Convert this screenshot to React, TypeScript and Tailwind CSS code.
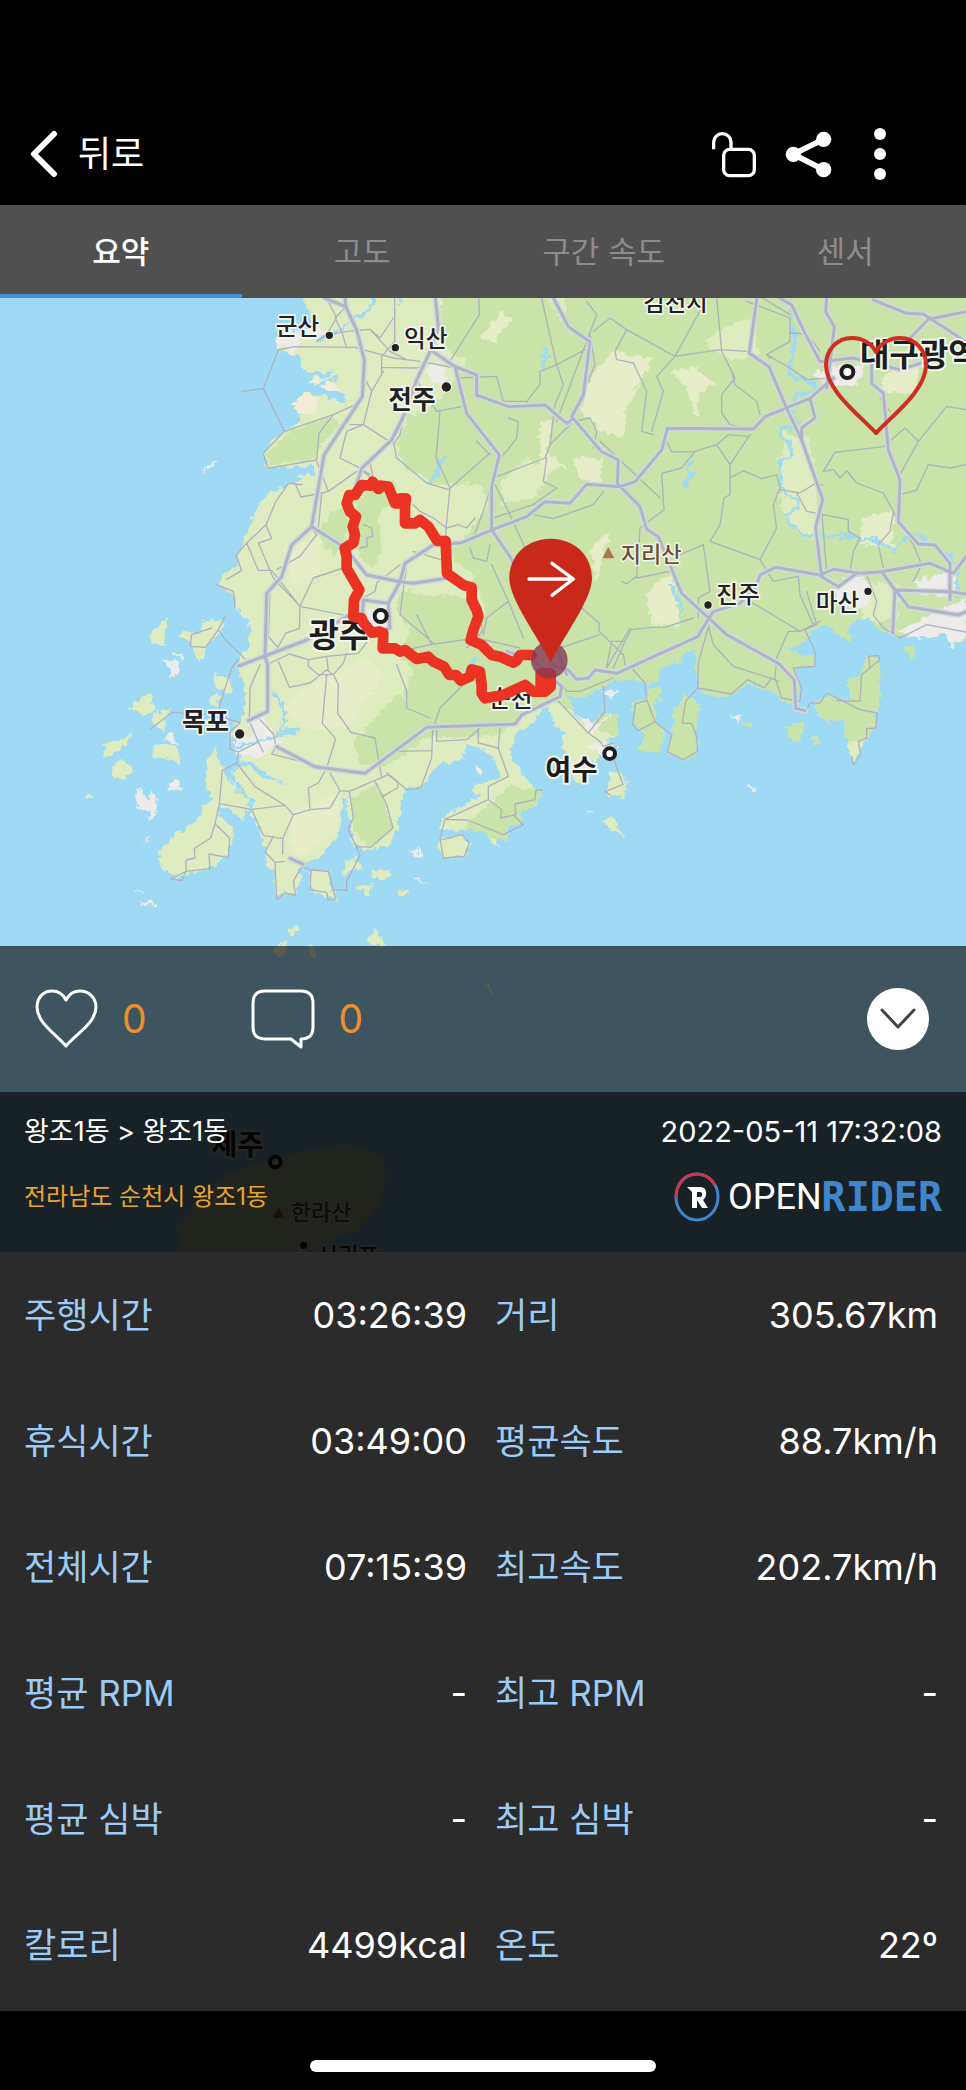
import React, { useState } from "react";

const tabs = ["요약", "고도", "구간 속도", "센서"];

const stats = [
  { label: "주행시간", value: "03:26:39" },
  { label: "거리", value: "305.67km" },
  { label: "휴식시간", value: "03:49:00" },
  { label: "평균속도", value: "88.7km/h" },
  { label: "전체시간", value: "07:15:39" },
  { label: "최고속도", value: "202.7km/h" },
  { label: "평균 RPM", value: "-" },
  { label: "최고 RPM", value: "-" },
  { label: "평균 심박", value: "-" },
  { label: "최고 심박", value: "-" },
  { label: "칼로리", value: "4499kcal" },
  { label: "온도", value: "22º" },
];

const mainland =
  "M920 -40 L915 20 935 50 940 90 900 112 832 118 834 156 880 172 900 168 905 205 925 225 990 224 1010 208 985 236 940 240 925 252 960 268 990 262 1030 290 1040 322 1010 302 960 292 912 282 876 318 906 356 880 385 855 401 820 430 790 466 803 511 890 506 940 504 948 532 905 530 890 556 840 570 800 590 770 630 750 680 732 726 712 776 705 810 672 830 650 870 700 885 705 930 735 950 745 990 750 1050 715 1086 718 1130 735 1186 735 1256 700 1280 700 1320 740 1330 780 1320 800 1300 790 1345 720 1350 722 1390 770 1400 800 1430 862 1464 790 1440 740 1400 690 1424 710 1480 775 1512 740 1530 730 1570 690 1535 658 1522 650 1550 690 1580 702 1610 690 1660 640 1705 560 1730 520 1738 480 1700 478 1660 540 1600 590 1565 610 1540 600 1525 640 1510 615 1450 620 1400 645 1350 665 1400 680 1440 740 1500 760 1560 790 1620 800 1660 795 1700 825 1720 830 1800 850 1785 885 1790 905 1740 890 1710 960 1680 1010 1620 1025 1560 1032 1480 1042 1540 1060 1640 1100 1655 1160 1645 1190 1600 1200 1540 1215 1480 1270 1460 1310 1400 1390 1385 1400 1340 1440 1350 1480 1380 1500 1440 1430 1455 1410 1480 1450 1490 1390 1520 1330 1560 1320 1590 1345 1600 1400 1595 1450 1600 1490 1650 1500 1620 1530 1630 1520 1590 1570 1570 1560 1540 1600 1530 1630 1480 1600 1470 1560 1420 1530 1370 1550 1300 1600 1275 1640 1225 1665 1280 1690 1300 1700 1400 1730 1460 1750 1440 1770 1390 1830 1360 1850 1345 1800 1330 1850 1300 1855 1250 1800 1255 1790 1300 1740 1270 1715 1230 1700 1185 1750 1200 1830 1155 1900 1140 1925 1160 1970 1150 1980 1110 2040 1090 2060 1060 2090 1050 2092 1170 2140 1195 2190 1196 2240 1156 2300 1176 2350 1210 2375 1215 2400 1180 2385 1110 2445 1104 2440 1070 2390 1065 2350 1055 2420 1036 2430 1000 2470 980 2550 1030 2545 975 2600 960 2650 1000 2690 1015 2790 1008 2840 985 2850 1050 2910 1010 L2960 -40 Z";

const islands = [
  "M440 1015 470 985 515 960 495 990 490 1045 450 1030Z",
  "M530 1010 560 1000 600 1010 610 970 640 965 680 980 660 1010 620 1045 600 1090 575 1045Z",
  "M640 1130 690 1140 700 1180 680 1190 650 1170Z",
  "M385 1230 455 1180 465 1240 430 1250Z",
  "M455 1255 510 1225 490 1300 465 1290Z",
  "M310 1340 395 1310 380 1340 340 1370 310 1380Z",
  "M330 1410 370 1380 400 1415 370 1445 335 1435Z",
  "M460 1345 490 1335 530 1350 540 1400 500 1380 460 1380Z",
  "M250 1500 275 1480 280 1500Z",
  "M630 1190 650 1180 665 1200 650 1230 630 1210Z",
  "M1900 1210 1920 1205 1960 1205 1970 1270 2000 1310 1970 1370 1920 1355 1930 1310 1900 1270Z",
  "M1945 1170 1980 1165 1985 1210 1945 1210Z",
  "M2020 1245 2060 1190 2100 1220 2090 1260 2093 1360 2050 1388 2000 1362 2020 1310Z",
  "M1775 1290 1790 1255 1850 1260 1850 1310 1810 1335 1770 1310Z",
  "M1830 1430 1855 1420 1880 1450 1875 1500 1820 1490Z",
  "M1810 1575 1840 1555 1860 1600 1880 1615 1840 1600Z",
  "M2230 1275 2260 1285 2250 1295Z",
  "M2360 1280 2410 1275 2400 1330 2370 1325Z",
  "M2440 1225 2480 1190 2530 1210 2560 1200 2540 1150 2580 1130 2600 1075 2640 1080 2640 1190 2630 1250 2620 1290 2590 1340 2560 1400 2540 1330 2530 1270 2470 1270Z",
  "M2440 1310 2465 1335 2440 1340Z",
  "M2710 1050 2745 1040 2740 1090Z",
  "M1030 1690 1070 1680 1090 1710 1030 1730Z",
  "M930 1715 985 1720 1000 1775 1010 1800 975 1795 930 1775Z",
  "M1110 1715 1170 1715 1170 1740 1120 1745Z",
  "M1070 1765 1120 1760 1100 1790Z",
  "M1190 1780 1230 1770 1215 1795Z",
  "M1310 1630 1385 1610 1410 1640 1390 1675 1330 1680Z",
  "M1100 1930 1130 1888 1155 1940 1120 1945Z",
  "M815 1965 850 1925 865 1950 830 1980Z",
  "M860 1890 895 1880 900 1895 870 1915Z",
  "M920 1960 945 1940 950 1985Z",
  "M1455 2050 1465 2060 1485 2095 1465 2080Z",
];

const jeju =
  "M540 2840 535 2780 570 2740 650 2650 740 2610 850 2570 930 2555 1050 2540 1140 2575 1160 2640 1140 2720 1080 2790 960 2840 860 2880 560 2880Z";

// towns, ports and rocks drawn in light grey
const urban = [
  "M832 118 860 105 950 85 990 110 900 130 880 172 860 145 834 150Z",
  "M1270 210 1320 190 1345 250 1300 255Z",
  "M1095 930 1170 920 1165 1000 1100 985Z",
  "M700 1330 780 1300 850 1330 780 1380 710 1375Z",
  "M740 1268 770 1240 830 1320 770 1300Z",
  "M510 1060 550 1070 555 1085 530 1075Z",
  "M490 1090 530 1080 540 1120 510 1145 510 1110Z",
  "M410 1480 420 1475 450 1510 450 1480 475 1510 470 1550 440 1575 450 1540 415 1530Z",
  "M500 1470 525 1438 550 1475Z",
  "M490 1320 520 1305 530 1340Z",
  "M610 520 645 485 650 492 625 515Z",
  "M395 1777 430 1778 420 1782Z",
  "M415 1812 465 1812 460 1822 425 1820Z",
  "M430 1640 440 1610 445 1625Z",
  "M2440 230 2490 200 2600 200 2570 260 2490 270Z",
  "M2500 850 2590 830 2620 880 2600 930 2520 920Z",
  "M2740 850 2850 820 2870 850 2850 900 2750 880Z",
  "M2690 1000 2898 900 2898 1010 2850 1050 2840 1010 2760 1020Z",
  "M1730 1240 1780 1280 1840 1245 1770 1310Z",
  "M1760 1345 1810 1330 1830 1380Z",
  "M1800 1180 1860 1180 1830 1200Z",
  "M1425 1400 1450 1410 1440 1430Z",
  "M1230 1655 1270 1670 1250 1680Z",
  "M2190 1255 2230 1250 2210 1270Z",
  "M2240 1465 2270 1470 2260 1485Z",
  "M1760 1535 1780 1540 1765 1548Z",
  "M1250 1650 1270 1660 1265 1685Z",
  "M1230 1735 1290 1755 1250 1750Z",
];

const forests = [
  "M1320 -40 1330 150 1400 190 1310 320 1225 350 1190 440 1215 510 1320 560 1440 560 1470 620 1410 700 1340 760 1420 830 1460 950 1400 900 1200 880 1190 930 1230 1000 1200 1060 1240 1120 1210 1180 1230 1240 1140 1290 1080 1400 1170 1400 1280 1320 1500 1310 1560 1260 1660 1200 1800 1300 1900 1330 1990 1480 2100 1420 2500 1340 2960 1300 2960 -40Z",
  "M800 465 870 395 990 355 1020 380 960 440 950 480 810 505Z",
  "M1070 600 1180 540 1200 600 1130 650 1150 750 1120 810 1080 780 1060 700Z",
  "M1010 625 1040 640 1040 730 1000 770 960 730 970 680Z",
  "M1060 1330 1200 1180 1240 1250 1180 1380 1080 1400Z",
  "M1050 1500 1130 1460 1180 1590 1110 1650 1060 1600Z",
  "M1390 1590 1530 1460 1630 1480 1520 1640Z",
];

const lowlands = [
  "M2110 130 2190 80 2260 60 2280 170 2190 190Z",
  "M2350 400 2430 420 2450 560 2450 700 2410 720 2340 620Z",
  "M2330 480 2420 470 2460 640 2440 720 2380 700Z",
  "M1640 0 1720 120 1700 60 1690 0Z",
  "M1500 560 1580 480 1660 520 1600 600 1510 620Z",
  "M2560 850 2700 860 2690 960 2600 980Z",
];

const meadows = [
  "M1500 40 1540 70 1480 130 1440 120Z",
  "M1620 380 1650 360 1640 460 1700 510 1620 520Z",
  "M1770 240 1840 160 1960 180 1880 330 1870 420 1800 400 1740 330Z",
  "M2010 220 2080 210 2150 260 2100 280 2090 370 2060 270Z",
  "M1720 480 1810 480 1800 560 1730 540Z",
  "M2590 660 2680 640 2680 750 2580 740Z",
  "M2650 230 2760 190 2740 290 2650 280Z",
  "M1830 700 1790 850 1770 760Z",
  "M1940 880 2020 820 2040 980 1950 980Z",
  "M900 1180 1100 1080 1150 1130 1050 1280 940 1300 850 1240Z",
  "M860 1550 1020 1480 1010 1600 890 1680Z",
  "M850 750 960 720 960 830 880 860Z",
  "M1840 1380 1870 1370 1880 1420 1850 1420Z",
];

const highways =
  "M975 1 1037 26 1070 96 1093 186 1087 296 972 471 935 686 875 741 845 836 800 886 795 1076 803 1100 803 1240 745 1268 M1035 -10 1037 26 M1305 -10 1315 86 1290 161 1250 246 1210 356 1175 426 1085 511 1060 590 M1300 161 1365 206 1400 346 1498 471 1475 566 1475 696 1530 776 1650 1000 1700 1130 M1365 206 1430 231 1430 291 1525 326 1635 321 1700 376 1720 361 M1655 -10 1705 86 1770 131 1750 291 1715 356 M935 686 1030 746 1060 780 1100 831 1200 851 1240 856 1340 841 M1475 696 1385 734 1300 741 1215 796 1200 851 1165 916 1090 906 1085 990 M1165 916 1170 990 1140 1000 M1475 696 1580 656 1635 611 1710 616 1760 559 1860 566 1905 551 1985 456 2002 391 2260 393 2295 356 2430 301 2500 240 M1715 356 1805 461 1855 486 1852 556 1920 626 1940 694 1975 716 2045 886 2127 961 2180 1010 2335 1096 2383 1146 2387 1231 2415 1238 M2272 -10 2248 166 2307 206 2360 331 2405 426 2468 604 2447 689 2465 836 2515 866 2570 826 M2340 1 2375 21 2415 106 2460 191 2560 180 2700 215 2780 190 M2480 -10 2477 41 2503 86 2490 196 2480 270 M2430 301 2445 360 2405 390 2405 426 M2615 201 2615 256 2650 286 2665 456 2700 546 2695 671 2755 738 2805 741 2850 796 2850 906 M2620 6 2720 46 2770 48 2898 131 M2898 41 2785 64 2730 121 M2127 961 2140 941 2220 916 2270 861 2280 831 2325 808 2460 831 2500 814 2580 826 2645 821 2790 796 2860 826 2898 776 M2645 821 2685 876 2678 1006 M2685 876 2850 881 2898 888 M2690 880 2725 926 2875 951 2898 941 M2127 961 2093 1016 1850 1126 1785 1116 1765 1141 1730 1144 1705 1116 1650 1100 M830 1346 945 1406 1095 1426 1280 1288 1545 1278 1565 1251 1680 1196 1685 1166 1600 1086 1520 1060 M715 1104 795 1074 920 1026 1050 950 M870 1681 910 1699";

const roads =
  "M725 280 790 272 835 156 880 146 1065 148 1180 180 1260 190 M790 272 853 400 790 466 803 511 950 486 M853 400 1000 350 1087 310 M950 486 957 406 1000 350 M980 0 1010 60 980 110 950 130 M1035 30 1005 60 1025 100 1040 150 M1184 0 1184 130 1145 175 M1110 94 1140 120 1180 60 M1145 175 1145 225 M1145 208 1250 210 1290 195 1365 210 M1436 0 1438 50 1350 190 M985 110 1040 100 1110 94 1170 160 1220 185 M1093 240 1115 280 1090 380 1040 400 1020 480 1070 505 1110 530 M1115 280 1150 220 M1050 380 1090 380 1160 425 M1250 246 1310 340 1385 326 M1320 340 1308 480 1350 570 1338 690 1338 740 M1180 430 1190 480 1280 555 1345 575 1470 465 M1430 430 1470 470 M1210 356 1200 410 1180 440 M1110 490 1120 545 1070 505 M950 490 985 580 965 585 955 690 M985 580 1070 520 M1370 240 1490 235 1510 310 1580 310 1585 330 M1580 310 1620 260 1620 220 1670 200 1755 155 M1670 200 1690 260 1665 320 1650 440 1720 370 M1525 360 1555 370 1550 420 1520 460 1495 485 M1650 440 1635 480 1480 540 M1640 480 1630 550 1670 570 1600 620 1480 660 M1720 370 1770 360 1790 400 1780 450 M1625 0 1640 70 1670 200 M1480 550 1530 650 1580 760 M1475 560 1450 640 1420 720 M935 690 950 710 900 775 830 815 M905 560 865 556 828 610 798 680 815 722 775 735 820 840 M865 556 885 556 903 597 965 585 M798 680 740 735 708 772 725 818 680 844 M740 735 775 817 815 817 900 925 1050 955 M820 840 900 925 898 992 858 1005 835 1045 M650 860 700 880 705 930 M1030 810 940 840 900 925 M810 880 805 1015 835 1050 800 1070 M835 1090 868 1168 930 1155 980 1115 1000 1130 1015 1160 1013 1246 1053 1303 1125 1320 1145 1440 M800 1100 868 1068 925 1085 980 1075 1075 1066 1110 1020 M925 1085 925 1105 955 1130 1000 1130 1030 1095 1040 1066 M980 1130 967 1276 1007 1322 980 1410 955 1455 925 1470 930 1535 M980 1075 985 1120 M780 1100 750 1170 748 1268 775 1332 790 1362 M780 1265 820 1308 828 1345 815 1368 940 1400 M675 955 655 995 680 1030 735 1082 M655 995 617 1048 570 1045 575 1010 635 990 M715 1085 695 1110 655 1232 M450 1294 515 1244 650 1250 720 1275 690 1300 690 1352 715 1362 775 1332 M715 1362 710 1395 667 1417 658 1517 645 1577 632 1620 583 1652 585 1680 558 1686 558 1720 512 1743 545 1748 558 1720 630 1712 627 1668 685 1679 689 1620 645 1577 M710 1395 765 1466 855 1522 880 1550 848 1622 848 1668 M658 1517 755 1534 855 1522 M755 1534 790 1612 848 1622 M820 1615 795 1662 825 1693 852 1690 M825 1693 830 1805 855 1785 887 1792 880 1750 905 1705 933 1716 985 1720 1000 1776 1040 1776 1040 1750 1080 1672 1045 1594 1060 1558 1048 1480 1020 1478 990 1530 930 1535 880 1550 M933 1716 930 1775 980 1783 985 1806 1007 1805 1000 1776 M990 1425 1020 1478 1048 1480 1165 1430 1195 1455 1192 1470 1148 1495 1160 1520 1179 1590 1112 1648 1068 1645 M1125 1450 1148 1495 M1160 1425 1180 1440 1220 1475 1262 1470 1295 1380 1298 1295 M1310 1295 1310 1330 1400 1325 1440 1290 M1435 1290 1435 1335 1495 1350 1500 1290 M1190 1360 1295 1358 M1495 1350 1525 1435 1465 1465 1465 1505 1335 1564 1320 1620 1330 1680 1393 1675 1408 1635 1385 1610 1330 1625 M1465 1505 1505 1535 1502 1560 1548 1550 1545 1518 1605 1505 1608 1476 1625 1476 M1335 1564 1402 1566 1510 1610 1570 1580 1540 1550 M1200 1060 1290 1040 1430 1020 1560 1050 M1295 1040 1250 950 M1190 1100 1220 1180 1220 1230 1290 1260 M1420 850 1448 1000 1400 1050 M1390 1160 1320 1230 1300 1290 M1240 760 1340 790 M1220 800 1200 950 1300 1035 M1240 620 1260 640 1300 660 1340 690 1375 680 1400 690 1425 660 M1410 750 1420 780 1460 790 1470 740 M1475 800 1525 910 1570 1020 M1525 910 1460 960 1450 1010 M1800 430 1980 600 M1810 580 1780 620 1660 662 1600 650 M1090 680 1115 690 1118 715 1100 720 1102 745 1080 750 M1090 900 1125 880 1130 855 1200 800 M1780 100 1830 60 1880 95 2025 175 2160 155 2240 160 M1880 95 1845 160 1850 185 1900 195 1940 280 1925 400 1960 410 M2110 20 2025 175 1970 235 1990 280 1955 400 M2150 0 2165 160 2205 240 2165 290 2165 345 2190 380 2260 395 M2165 160 2195 220 2205 260 2270 310 2280 350 M2240 10 2370 60 2370 130 2300 170 2370 210 2420 245 2500 240 M2300 170 2310 180 M2370 105 2420 108 2460 160 M2280 -5 2370 50 M2000 430 2015 462 2085 460 2150 440 2185 410 2240 415 M2150 440 2190 500 2250 410 M2085 460 2045 510 1985 526 1992 635 1920 690 1910 840 2010 820 M2190 500 2190 590 2172 600 2160 680 2130 730 2280 785 2330 690 2320 620 2340 570 2330 530 2285 542 2230 518 2190 540 M2280 785 2320 850 2395 835 2400 890 2440 980 M2110 740 2040 770 M2110 740 2130 880 2095 900 2095 960 M1770 110 1785 200 1760 260 M1670 370 1790 50 1760 10 M2340 575 2400 585 2440 560 2468 560 M2390 585 2420 640 2545 665 2545 700 2580 720 2560 760 2550 820 M2465 640 2480 820 M2470 520 2500 515 2520 540 2540 518 2570 555 2650 585 2680 640 2670 700 2635 740 2650 810 M2470 520 2505 463 2650 446 2715 390 2755 430 2840 325 2898 335 M2755 430 2700 530 M2700 590 2750 576 2785 500 2850 510 2898 500 M2640 300 2670 340 M2680 640 2740 740 2765 800 2740 850 M2600 830 2630 910 2620 950 2650 990 2700 1020 2780 980 2898 1002 M2250 910 2400 1000 2460 970 M2420 880 2450 980 M2400 1000 2365 1000 2330 1080 2325 1140 2345 1200 2400 1210 2405 1170 2380 1110 2445 1105 2445 1060 2415 995 2450 980 M2127 980 2095 1095 2093 1170 2195 1188 2243 1145 2293 1170 2315 1140 2335 1150 M2127 990 2140 1040 2200 1105 2325 1145 M2093 1170 2057 1210 2047 1276 2075 1276 2090 1315 2093 1360 2050 1385 2003 1362 2015 1310 1965 1272 1940 1205 1935 1155 1895 1110 M1940 1208 1907 1217 1898 1280 1915 1298 1965 1272 M1890 990 1820 1110 M1745 930 1797 975 1797 1000 1870 1070 1875 1100 M1835 1030 1820 1105 M1875 1030 1840 1110 M1835 1030 1875 1030 1893 995 1960 988 1995 988 2080 960 M1680 1050 1800 1010 M1686 1160 1700 1180 1740 1180 1840 1140 M1810 1165 1815 1240 1765 1305 1675 1210 M1765 1305 1800 1330 1810 1345 1840 1335 M1840 1380 1869 1460 1815 1480 1832 1492 M2420 1235 2430 1215 2460 1215 2480 1185 2580 1235 2632 1245 2627 1290 2600 1292 2600 1320 2575 1330 2582 1370 2560 1400 2555 1375 M2510 1208 2580 1210 2585 1130 2610 1110 2640 1085 2635 1072 2605 1075 2610 1110 M1865 850 1880 857 1910 835";

const rivers =
  "M1120 0 1115 30 1080 55 1050 70 1020 95 950 130 M925 270 1010 240 M860 70 830 40 M1200 -10 1200 20 M1320 480 1310 530 1280 555 M1310 530 1340 465 M1640 150 1630 210 M1650 180 1620 170 M2370 10 2372 60 2385 130 2365 235 2430 245 2448 270 2435 285 2395 285 2370 330 2400 380 M2410 400 2350 385 2340 410 2375 450 2370 480 2340 490 2345 580 2395 610 2390 630 2360 650 2370 680 2410 710 2480 715 2550 715 2590 730 2610 720 2680 755 2720 715 2760 710 2780 730 M2840 760 2870 800 2870 900 M2075 480 2060 570 M2090 520 2050 560 M2010 860 2030 900 2050 930 2040 960 M820 1180 855 1240 840 1300 900 1290 M1400 1120 1430 1080 M900 1296 700 1350 M690 1420 740 1500 M1035 1650 1035 1500";

const route =
  "M695 645 660 645 650 662 640 668 600 650 575 645 545 615 512 600 520 570 535 530 530 510 515 480 515 443 490 435 441 400 437 303 412 303 385 260 360 240 345 250 315 250 315 200 318 175 300 175 305 190 285 190 265 140 240 137 235 147 218 125 212 137 185 135 165 165 148 165 140 190 150 215 168 230 158 260 165 285 160 308 134 325 140 350 140 385 178 450 162 480 160 530 185 535 190 548 215 578 240 575 250 580 248 625 285 625 300 635 315 630 350 657 385 650 400 665 432 680 448 705 468 705 482 722 510 710 515 688 540 695 545 735 545 760 555 775 610 765 675 735 700 755 735 755 752 740 752 700 722 700 722 740";

const places = [
  { name: "김천시", x: 1930, y: 38, size: 70 },
  { name: "군산", x: 827, y: 110, size: 71, dot: [988, 112] },
  { name: "익산", x: 1212, y: 147, size: 71, dot: [1186, 149] },
  { name: "전주", x: 1165, y: 334, size: 77, dot: [1339, 267], big: true },
  { name: "진주", x: 2149, y: 916, size: 71, dot: [2124, 921] },
  { name: "마산", x: 2447, y: 938, size: 71, dot: [2604, 880] },
  { name: "목포", x: 546, y: 1298, size: 77, dot: [719, 1308], big: true },
  { name: "순천", x: 1467, y: 1228, size: 71 },
  { name: "서귀포", x: 950, y: 2898, size: 68, dot: [911, 2842] },
];

const cities = [
  { name: "대구광역시", x: 2580, y: 204, size: 96, dot: [2542, 222, 18] },
  { name: "광주", x: 926, y: 1048, size: 98, dot: [1142, 954, 18] },
  { name: "여수", x: 1636, y: 1446, size: 85, dot: [1829, 1367, 16] },
  { name: "제주", x: 634, y: 2572, size: 85, dot: [826, 2592, 16] },
];

const peaks = [
  { name: "지리산", x: 1862, y: 793, size: 66, at: [1825, 767] },
  { name: "한라산", x: 872, y: 2766, size: 66, at: [836, 2746] },
];

const CourseMap: React.FC = () => (
  <svg
    className="absolute inset-0 h-full w-full"
    viewBox="0 0 2898 2862"
    preserveAspectRatio="xMidYMid slice"
    role="img"
    aria-label="주행 경로 지도"
  >
    <defs>
      <filter id="coast" x="0" y="0" width="1" height="1">
        <feTurbulence type="fractalNoise" baseFrequency="0.05" numOctaves="3" seed="4" />
        <feDisplacementMap in="SourceGraphic" scale="30" xChannelSelector="R" yChannelSelector="G" />
      </filter>
      <clipPath id="land">
        <path d={mainland} />
        {islands.slice(10, 28).map((d) => (
          <path key={d} d={d} />
        ))}
      </clipPath>
    </defs>

    <rect width="2898" height="2862" fill="#9fdaf5" />
    <g filter="url(#coast)">
      <rect width="2898" height="2862" fill="#9fdaf5" />
      <g fill="#dfecc0">
        <path d={mainland} />
        <path d={jeju} />
        {islands.map((d) => (
          <path key={d} d={d} />
        ))}
      </g>
      <g clipPath="url(#land)">
        {forests.map((d) => (
          <path key={d} d={d} fill="#c9e3a8" />
        ))}
        {lowlands.map((d) => (
          <path key={d} d={d} fill="#dfecc0" />
        ))}
        {meadows.map((d) => (
          <path key={d} d={d} fill="#e7edc9" />
        ))}
      </g>
      <path d="M876 316 912 284 960 300 940 345 900 356Z M930 246 990 244 1030 285 960 270Z" fill="#f3ecd8" />
      {urban.map((d) => (
        <path key={d} d={d} fill="#edeceb" />
      ))}
      <path d={rivers} fill="none" stroke="#9fdaf5" strokeWidth="9" />
    </g>

    <g fill="none" strokeLinejoin="round" strokeLinecap="round">
      <path d={roads} stroke="#b0b1bf" strokeWidth="4" />
      <path d={highways} stroke="#d2d9df" strokeWidth="18" />
      <path d={highways} stroke="#b0b5c4" strokeWidth="9" />
    </g>

    <g className="font-['Noto_Sans_CJK_KR',sans-serif]" stroke="#f3f6ef" strokeLinejoin="round" paintOrder="stroke">
      {places.map((p) => (
        <g key={p.name} fill="#222">
          <text x={p.x} y={p.y} fontSize={p.size} fontWeight={p.big ? 700 : 500} strokeWidth="10">
            {p.name}
          </text>
          {p.dot && <circle cx={p.dot[0]} cy={p.dot[1]} r={p.big ? 14 : 11} strokeWidth="6" />}
        </g>
      ))}
      {cities.map((c) => (
        <g key={c.name}>
          <text x={c.x} y={c.y} fontSize={c.size} fontWeight="700" fill="#1d1d1d" strokeWidth="12">
            {c.name}
          </text>
          <circle cx={c.dot[0]} cy={c.dot[1]} r={c.dot[2]} fill="#fff" stroke="#1d1d1d" strokeWidth="12" paintOrder="normal" />
        </g>
      ))}
      {peaks.map((p) => (
        <g key={p.name}>
          <path d={`M${p.at[0]} ${p.at[1] - 20} l18 34 h-36Z`} fill="#ae7648" stroke="none" />
          <text x={p.x} y={p.y} fontSize={p.size} fontWeight="500" fill="#6b4f35" strokeWidth="9">
            {p.name}
          </text>
        </g>
      ))}
    </g>

    <g transform="translate(900 426)" strokeLinejoin="round" strokeLinecap="round">
      <path d={route} fill="none" stroke="#ea3323" strokeWidth="32" />
      <circle cx="748" cy="660" r="55" fill="#863a52" fillOpacity="0.8" />
      <path
        d="M752 668 C720 600 628 480 628 415 C628 345 682 296 752 296 C822 296 876 345 876 415 C876 480 784 600 752 668Z"
        fill="#c8291b"
      />
      <path d="M687 417 H820 M756 370 L820 417 756 466" fill="none" stroke="#fff" strokeWidth="10" />
    </g>
  </svg>
);

const Header: React.FC = () => (
  <header className="flex items-center justify-between bg-black pt-[118px] pr-[62px] pb-[15px] pl-[30px] text-white">
    <button className="flex h-[72px] items-center gap-5 text-[36px]">
      <svg width="28" height="48" viewBox="0 0 28 48" fill="none" stroke="currentColor" strokeWidth="6" strokeLinecap="round" strokeLinejoin="round">
        <path d="M24 4 L4 24 L24 44" />
      </svg>
      뒤로
    </button>
    <div className="flex items-center gap-6">
      <button aria-label="잠금 해제">
        <svg width="48" height="48" viewBox="96 60 144 144" fill="none" stroke="currentColor" strokeWidth="10">
          <path d="M101 118 V96 A26 25 0 0 1 153 96 V118" />
          <rect x="131" y="118" width="92" height="79" rx="18" />
        </svg>
      </button>
      <button aria-label="공유">
        <svg width="48" height="48" viewBox="312 60 144 144" fill="currentColor">
          <path d="M431 88 L340 133 L431 179" fill="none" stroke="currentColor" strokeWidth="17" />
          <circle cx="431" cy="88" r="23" />
          <circle cx="340" cy="133" r="23" />
          <circle cx="431" cy="179" r="23" />
        </svg>
      </button>
      <button aria-label="더보기">
        <svg width="48" height="54" viewBox="0 0 48 54" fill="currentColor">
          <circle cx="24" cy="7" r="6" />
          <circle cx="24" cy="27" r="6" />
          <circle cx="24" cy="47" r="6" />
        </svg>
      </button>
    </div>
  </header>
);

const BrandLogo: React.FC = () => (
  <div className="flex items-center gap-2">
    <svg width="46" height="50" viewBox="0 0 46 50" fill="none" strokeWidth="3">
      <ellipse cx="23" cy="25" rx="21" ry="23" stroke="#3f86cc" />
      <path d="M2 26 C2 11 11 2 23 2 C31 2 37 6 41 13" stroke="#cf344b" />
      {/* the badge letter is cut with a slanted serif */}
      <path d="M13 15 H27 C33 15 34 25 29 28 L34 36 H28 L23 28 V36 H18 V20Z M23 20 V25 H26 C29 25 29 20 26 20Z" fill="#fff" fillRule="evenodd" />
    </svg>
    <span className="flex items-center leading-none">
      <span className="font-[Roboto,sans-serif] text-[36px] text-white">OPEN</span>
      <span className="font-['DejaVu_Sans_Mono',monospace] text-[40px] font-bold text-[#3f86cc]">RIDER</span>
    </span>
  </div>
);

const App: React.FC = () => {
  const [activeTab, setActiveTab] = useState("요약");

  return (
    <div className="flex min-h-screen w-full flex-col bg-black font-[Inter,'Noto_Sans_CJK_KR',sans-serif]">
      <Header />

      {/* Tabs */}
      <nav className="grid grid-cols-4 bg-[#505050]">
        {tabs.map((tab) => (
          <button
            key={tab}
            onClick={() => setActiveTab(tab)}
            className={
              activeTab === tab
                ? "h-[93px] border-t-6 border-b-4 border-t-transparent border-b-[#4a90d9] text-[31px] font-medium text-white"
                : "h-[93px] border-t-6 border-b-4 border-transparent text-[31px] text-[#8c8c8c]"
            }
          >
            {tab}
          </button>
        ))}
      </nav>

      {/* Map with overlays */}
      <section className="relative overflow-hidden">
        <CourseMap />
        <div className="relative flex h-[648px] items-start justify-end pt-[38px] pr-[38px]">
          <button aria-label="즐겨찾기">
            <svg width="104" height="100" viewBox="0 0 104 100" fill="none" stroke="#cf2e22" strokeWidth="4" strokeLinejoin="round">
              <path d="M52 97 C34 78 2 54 2 29 C2 14 13 2 28 2 C39 2 48 8 52 16 C56 8 65 2 76 2 C91 2 102 14 102 29 C102 54 70 78 52 97Z" />
            </svg>
          </button>
        </div>

        <div className="relative flex h-[146px] items-center bg-black/61 pr-[37px] pl-[34px]">
          <button className="flex items-center gap-6 text-[39px] text-[#ec8f2d]" aria-label="좋아요 0">
            <svg width="64" height="60" viewBox="0 0 64 60" fill="none" stroke="#fff" strokeWidth="3" strokeLinejoin="round">
              <path d="M32 57 C22 45 3 34 3 18 C3 9 9 2 18 2 C24 2 29 5 32 11 C35 5 40 2 46 2 C55 2 62 9 62 18 C62 34 42 45 32 57Z" />
            </svg>
            0
          </button>
          <button className="ml-[104px] flex items-center gap-6 text-[39px] text-[#ec8f2d]" aria-label="댓글 0">
            <svg width="64" height="60" viewBox="0 0 64 60" fill="none" stroke="#fff" strokeWidth="3" strokeLinejoin="round">
              <path d="M14 2 H50 Q62 2 62 14 V38 Q62 50 50 50 V58 L40 50 H14 Q2 50 2 38 V14 Q2 2 14 2Z" />
            </svg>
            0
          </button>
          <button className="ml-auto flex h-[62px] w-[62px] items-center justify-center rounded-full bg-white" aria-label="접기">
            <svg width="36" height="22" viewBox="0 0 36 22" fill="none" stroke="#444" strokeWidth="3" strokeLinecap="round" strokeLinejoin="round">
              <path d="M2 2 L18 19 L34 2" />
            </svg>
          </button>
        </div>

        <div className="relative flex flex-col gap-5 bg-black/85 px-6 pt-5 pb-[30px]">
          <div className="flex h-10 items-center justify-between text-white">
            <h1 className="text-[27px]">왕조1동 &gt; 왕조1동</h1>
            <time className="text-[29px]">2022-05-11 17:32:08</time>
          </div>
          <div className="flex h-[50px] items-center justify-between">
            <p className="text-[24px] text-[#e9a431]">전라남도 순천시 왕조1동</p>
            <BrandLogo />
          </div>
        </div>
      </section>

      {/* Ride stats */}
      <dl className="grid grid-cols-2 gap-x-7 bg-[#2b2b2b] pr-7 pb-[3px] pl-6">
        {stats.map((item) => (
          <div key={item.label} className="flex h-[126px] items-center justify-between">
            <dt className="text-[35px] text-[#9ccbf5]">{item.label}</dt>
            <dd className="text-[36px] text-white">{item.value}</dd>
          </div>
        ))}
      </dl>

      <footer className="flex justify-center pt-[49px] pb-[18px]">
        <div className="h-3 w-[346px] rounded-full bg-white" />
      </footer>
    </div>
  );
};

export default App;
